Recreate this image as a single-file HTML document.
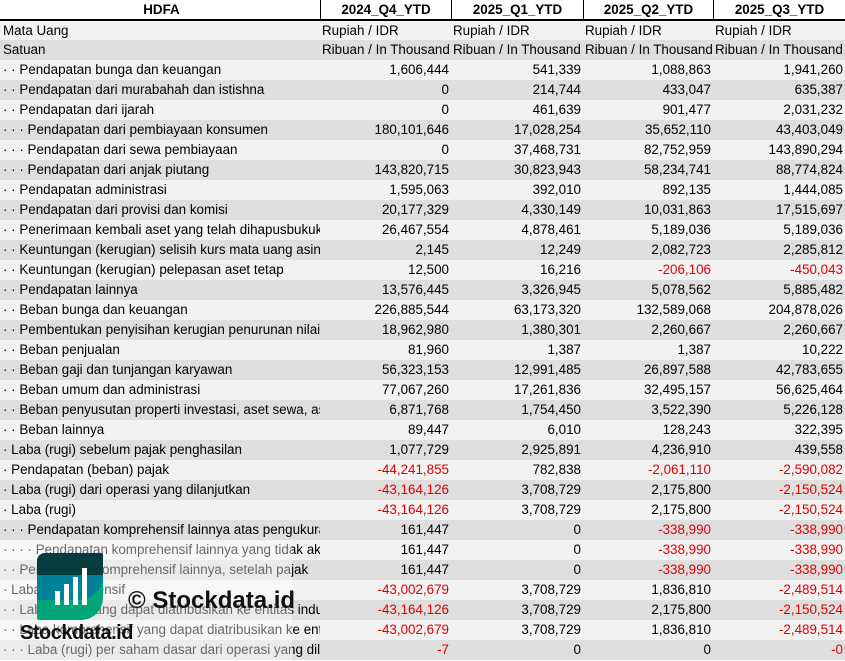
<!DOCTYPE html>
<html><head><meta charset="utf-8"><style>
*{margin:0;padding:0;box-sizing:border-box}
body{width:845px;height:661px;overflow:hidden;background:#fff;font-family:"Liberation Sans",sans-serif;font-size:13.4px;color:#000;position:relative}
.r{display:flex;height:20px;line-height:20px}
.r>div{overflow:hidden;white-space:nowrap}
.c0{width:320px;padding-left:3px}
.c1{width:131px}.c2{width:132px}.c3{width:130px}.c4{width:132px}
.n>div:not(.c0){text-align:right;padding-right:2px}
.a{background:#f2f2f2}.b{background:#dedede}
.h{background:#fff;font-weight:bold;border-bottom:2px solid #000;height:21px;line-height:19px}
.h>div{text-align:center;border-left:1px solid #000}
.h>div:first-child{border-left:none}
.u>div:not(.c0){padding-left:2px}
.red{color:#e00000}
</style></head><body>
<div class="r h"><div class="c0">HDFA</div><div class="c1">2024_Q4_YTD</div><div class="c2">2025_Q1_YTD</div><div class="c3">2025_Q2_YTD</div><div class="c4">2025_Q3_YTD</div></div>
<div class="r a u" style="height:19px;line-height:19px"><div class="c0">Mata Uang</div><div class="c1">Rupiah / IDR</div><div class="c2">Rupiah / IDR</div><div class="c3">Rupiah / IDR</div><div class="c4">Rupiah / IDR</div></div>
<div class="r b u"><div class="c0">Satuan</div><div class="c1">Ribuan / In Thousand</div><div class="c2">Ribuan / In Thousand</div><div class="c3">Ribuan / In Thousand</div><div class="c4">Ribuan / In Thousand</div></div>
<div class="r a n"><div class="c0">· · Pendapatan bunga dan keuangan</div><div class="c1">1,606,444</div><div class="c2">541,339</div><div class="c3">1,088,863</div><div class="c4">1,941,260</div></div>
<div class="r b n"><div class="c0">· · Pendapatan dari murabahah dan istishna</div><div class="c1">0</div><div class="c2">214,744</div><div class="c3">433,047</div><div class="c4">635,387</div></div>
<div class="r a n"><div class="c0">· · Pendapatan dari ijarah</div><div class="c1">0</div><div class="c2">461,639</div><div class="c3">901,477</div><div class="c4">2,031,232</div></div>
<div class="r b n"><div class="c0">· · · Pendapatan dari pembiayaan konsumen</div><div class="c1">180,101,646</div><div class="c2">17,028,254</div><div class="c3">35,652,110</div><div class="c4">43,403,049</div></div>
<div class="r a n"><div class="c0">· · · Pendapatan dari sewa pembiayaan</div><div class="c1">0</div><div class="c2">37,468,731</div><div class="c3">82,752,959</div><div class="c4">143,890,294</div></div>
<div class="r b n"><div class="c0">· · · Pendapatan dari anjak piutang</div><div class="c1">143,820,715</div><div class="c2">30,823,943</div><div class="c3">58,234,741</div><div class="c4">88,774,824</div></div>
<div class="r a n"><div class="c0">· · Pendapatan administrasi</div><div class="c1">1,595,063</div><div class="c2">392,010</div><div class="c3">892,135</div><div class="c4">1,444,085</div></div>
<div class="r b n"><div class="c0">· · Pendapatan dari provisi dan komisi</div><div class="c1">20,177,329</div><div class="c2">4,330,149</div><div class="c3">10,031,863</div><div class="c4">17,515,697</div></div>
<div class="r a n"><div class="c0">· · Penerimaan kembali aset yang telah dihapusbukukan</div><div class="c1">26,467,554</div><div class="c2">4,878,461</div><div class="c3">5,189,036</div><div class="c4">5,189,036</div></div>
<div class="r b n"><div class="c0">· · Keuntungan (kerugian) selisih kurs mata uang asing</div><div class="c1">2,145</div><div class="c2">12,249</div><div class="c3">2,082,723</div><div class="c4">2,285,812</div></div>
<div class="r a n"><div class="c0">· · Keuntungan (kerugian) pelepasan aset tetap</div><div class="c1">12,500</div><div class="c2">16,216</div><div class="c3 red">-206,106</div><div class="c4 red">-450,043</div></div>
<div class="r b n"><div class="c0">· · Pendapatan lainnya</div><div class="c1">13,576,445</div><div class="c2">3,326,945</div><div class="c3">5,078,562</div><div class="c4">5,885,482</div></div>
<div class="r a n"><div class="c0">· · Beban bunga dan keuangan</div><div class="c1">226,885,544</div><div class="c2">63,173,320</div><div class="c3">132,589,068</div><div class="c4">204,878,026</div></div>
<div class="r b n"><div class="c0">· · Pembentukan penyisihan kerugian penurunan nilai</div><div class="c1">18,962,980</div><div class="c2">1,380,301</div><div class="c3">2,260,667</div><div class="c4">2,260,667</div></div>
<div class="r a n"><div class="c0">· · Beban penjualan</div><div class="c1">81,960</div><div class="c2">1,387</div><div class="c3">1,387</div><div class="c4">10,222</div></div>
<div class="r b n"><div class="c0">· · Beban gaji dan tunjangan karyawan</div><div class="c1">56,323,153</div><div class="c2">12,991,485</div><div class="c3">26,897,588</div><div class="c4">42,783,655</div></div>
<div class="r a n"><div class="c0">· · Beban umum dan administrasi</div><div class="c1">77,067,260</div><div class="c2">17,261,836</div><div class="c3">32,495,157</div><div class="c4">56,625,464</div></div>
<div class="r b n"><div class="c0">· · Beban penyusutan properti investasi, aset sewa, aset tetap</div><div class="c1">6,871,768</div><div class="c2">1,754,450</div><div class="c3">3,522,390</div><div class="c4">5,226,128</div></div>
<div class="r a n"><div class="c0">· · Beban lainnya</div><div class="c1">89,447</div><div class="c2">6,010</div><div class="c3">128,243</div><div class="c4">322,395</div></div>
<div class="r b n"><div class="c0">· Laba (rugi) sebelum pajak penghasilan</div><div class="c1">1,077,729</div><div class="c2">2,925,891</div><div class="c3">4,236,910</div><div class="c4">439,558</div></div>
<div class="r a n"><div class="c0">· Pendapatan (beban) pajak</div><div class="c1 red">-44,241,855</div><div class="c2">782,838</div><div class="c3 red">-2,061,110</div><div class="c4 red">-2,590,082</div></div>
<div class="r b n"><div class="c0">· Laba (rugi) dari operasi yang dilanjutkan</div><div class="c1 red">-43,164,126</div><div class="c2">3,708,729</div><div class="c3">2,175,800</div><div class="c4 red">-2,150,524</div></div>
<div class="r a n"><div class="c0">· Laba (rugi)</div><div class="c1 red">-43,164,126</div><div class="c2">3,708,729</div><div class="c3">2,175,800</div><div class="c4 red">-2,150,524</div></div>
<div class="r b n"><div class="c0">· · · Pendapatan komprehensif lainnya atas pengukuran</div><div class="c1">161,447</div><div class="c2">0</div><div class="c3 red">-338,990</div><div class="c4 red">-338,990</div></div>
<div class="r a n"><div class="c0">· · · · Pendapatan komprehensif lainnya yang tidak akan</div><div class="c1">161,447</div><div class="c2">0</div><div class="c3 red">-338,990</div><div class="c4 red">-338,990</div></div>
<div class="r b n"><div class="c0">· · Pendapatan komprehensif lainnya, setelah pajak</div><div class="c1">161,447</div><div class="c2">0</div><div class="c3 red">-338,990</div><div class="c4 red">-338,990</div></div>
<div class="r a n"><div class="c0">· Laba komprehensif</div><div class="c1 red">-43,002,679</div><div class="c2">3,708,729</div><div class="c3">1,836,810</div><div class="c4 red">-2,489,514</div></div>
<div class="r b n"><div class="c0">· · Laba (rugi) yang dapat diatribusikan ke entitas induk</div><div class="c1 red">-43,164,126</div><div class="c2">3,708,729</div><div class="c3">2,175,800</div><div class="c4 red">-2,150,524</div></div>
<div class="r a n"><div class="c0">· · Laba komprehensif yang dapat diatribusikan ke entitas</div><div class="c1 red">-43,002,679</div><div class="c2">3,708,729</div><div class="c3">1,836,810</div><div class="c4 red">-2,489,514</div></div>
<div class="r b n"><div class="c0">· · · Laba (rugi) per saham dasar dari operasi yang dilanjutkan</div><div class="c1 red">-7</div><div class="c2">0</div><div class="c3">0</div><div class="c4 red">-0</div></div>

<div style="position:absolute;left:0;top:541px;width:292px;height:120px;background:rgba(255,255,255,0.4)"></div>
<div style="position:absolute;left:37px;top:553px;width:66px;height:67px;border-radius:8px 2px 22px 2px;overflow:hidden;background:#00a67a">
 <div style="position:absolute;left:0;top:0;width:66px;height:22px;background:#083d3e"></div>
 <div style="position:absolute;left:0;top:22px;width:66px;height:25px;background:#00819a;border-radius:0 0 30px 0"></div>
 <div style="position:absolute;left:18px;top:38px;width:5px;height:14px;background:#fff"></div>
 <div style="position:absolute;left:27px;top:31px;width:5px;height:21px;background:#fff"></div>
 <div style="position:absolute;left:36px;top:24px;width:5px;height:28px;background:#fff"></div>
 <div style="position:absolute;left:45px;top:15px;width:5px;height:37px;background:#fff"></div>
</div>
<div style="position:absolute;left:20px;top:622px;font-weight:bold;font-size:20px;letter-spacing:-0.5px;color:#111">Stockdata.id</div>
<div style="position:absolute;left:128px;top:587px;font-weight:bold;font-size:24px;color:#111">© Stockdata.id</div>
</body></html>
